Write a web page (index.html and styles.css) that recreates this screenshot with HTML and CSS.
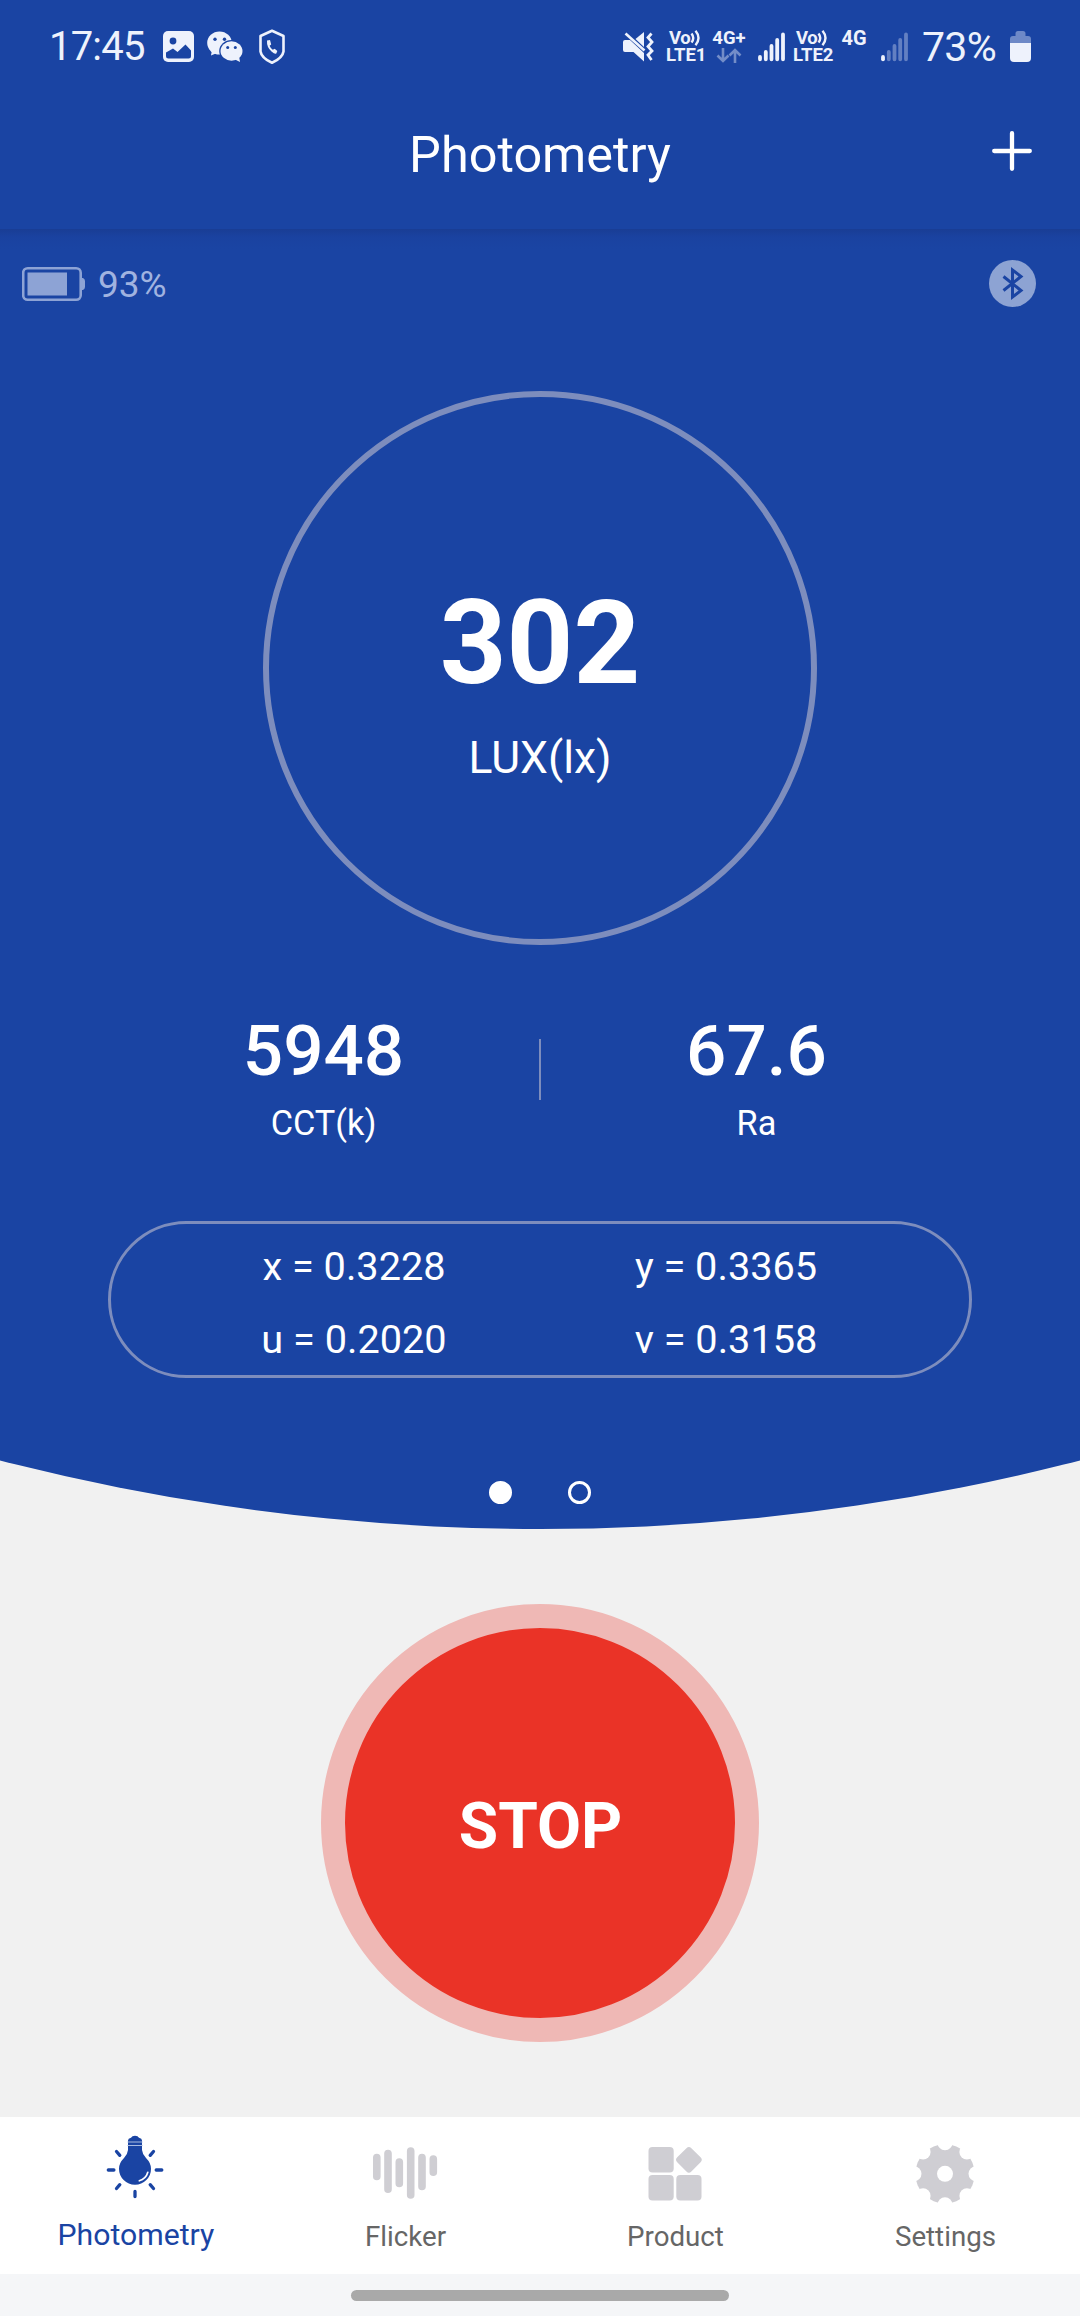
FILE: index.html
```html
<!DOCTYPE html>
<html lang="en">
<head>
  <meta charset="UTF-8">
  <meta name="viewport" content="width=device-width, initial-scale=1.0">
  <title>Photometry</title>
  <link rel="stylesheet" href="styles.css">
</head>
<body>
  <div class="status-bar">
    <div class="status-left">
      <span class="clock">17:45</span>
      <svg class="ico-photo" width="31" height="31" viewBox="0 0 31 31">
        <rect width="31" height="31" rx="5" fill="#eef2fc"/>
        <circle cx="10" cy="10" r="3.4" fill="#1a44a3"/>
        <path d="M3 21.5l7-4 4.500 3.500L22.500 13.500l5.500 6V25q0 2.500-2.500 2.500h-20Q3 27.500 3 25z" fill="#1a44a3"/>
      </svg>
      <svg class="ico-chat" width="36" height="32" viewBox="0 0 36 32">
        <ellipse cx="12.500" cy="12" rx="12.300" ry="11.500" fill="#eef2fc"/>
        <path d="M5 19l-1 5.500 6-2.500z" fill="#eef2fc"/>
        <ellipse cx="24.500" cy="20" rx="12.300" ry="11" fill="#1a44a3"/>
        <ellipse cx="24.500" cy="20" rx="11" ry="9.700" fill="#eef2fc"/>
        <path d="M27 28l6 3-.8-5z" fill="#eef2fc"/>
        <g fill="#1a44a3">
          <circle cx="8" cy="8.200" r="1.700"/><circle cx="17.500" cy="8.200" r="1.700"/>
          <circle cx="20.700" cy="16.500" r="1.500"/><circle cx="28.300" cy="16.500" r="1.500"/>
        </g>
      </svg>
      <svg class="ico-shield" width="28" height="36" viewBox="0 0 28 36">
        <path d="M14 1.800L25.500 7v15.500Q24.500 29 14 33.800 3.500 29 2.500 22.500V7z" fill="none" stroke="#eef2fc" stroke-width="2.600" stroke-linejoin="round"/>
        <path d="M9 11.500l3-.5 1.200 4.500-1.600 1.300q1 2.700 3.200 4l1.900-1 2.600 2.200-1 2.500Q17 25.500 13.500 22.500 8.500 18 9 11.500z" fill="#eef2fc"/>
      </svg>
    </div>
    <div class="status-right">
      <svg class="ico-mute" width="31" height="30" viewBox="0 0 31 30">
        <path d="M0 10Q0 8 2 8H7l14 13v8.500L10.500 20H2Q0 20 0 18z" fill="#eef2fc"/>
        <path d="M12.500 7L21 0V15z" fill="#eef2fc"/>
        <path d="M2.500 1.500L21.500 18.500" stroke="#eef2fc" stroke-width="2.600"/>
        <path d="M28.500 1.500l-3.500 4 4 4.500-4 4.500 4 4.500-4 4 3.500 5" fill="none" stroke="#eef2fc" stroke-width="2.800"/>
      </svg>
      <div class="lte">
        <div class="vo">Vo<svg width="11" height="16" viewBox="0 0 11 16"><path d="M1.500 3.500q3.500 4.500 0 9M5.500 .8q6 7.200 0 14.400" fill="none" stroke="#eef2fc" stroke-width="2.400"/></svg></div>
        <div>LTE1</div>
      </div>
      <div class="net net-plus">
        <div>4G+</div>
        <svg width="26" height="15" viewBox="0 0 26 15"><path d="M7 0v13M1.500 7.500L7 13l5.500-5.500M19 15V2M13.500 7.500L19 2l5.500 5.500" fill="none" stroke="#eef2fc" stroke-opacity=".42" stroke-width="2.600"/></svg>
      </div>
      <svg class="bars" width="28" height="30" viewBox="0 0 28 30">
        <g stroke="#eef2fc" stroke-width="3.800" stroke-linecap="round">
          <path d="M2 25v2.300M7.800 20v7.300M13.500 14v13.300M19.200 8v19.300M25 2.500v24.800"/>
        </g>
      </svg>
      <div class="lte lte-two">
        <div class="vo">Vo<svg width="11" height="16" viewBox="0 0 11 16"><path d="M1.500 3.500q3.500 4.500 0 9M5.500 .8q6 7.200 0 14.400" fill="none" stroke="#eef2fc" stroke-width="2.400"/></svg></div>
        <div>LTE2</div>
      </div>
      <div class="net">
        <div class="big">4G</div>
      </div>
      <svg class="bars bars-two" width="28" height="30" viewBox="0 0 28 30">
        <g stroke="#eef2fc" stroke-width="3.800" stroke-linecap="round">
          <path d="M2 25v2.300"/>
          <path d="M7.800 20v7.300M13.500 14v13.300M19.200 8v19.300M25 2.500v24.800" stroke-opacity=".35"/>
        </g>
      </svg>
      <span class="charge">73%</span>
      <svg class="ico-battery" width="21" height="31" viewBox="0 0 21 31">
        <path d="M0 12V8q0-3 3-3h2.500V2.500Q5.500 0 8 0h5q2.500 0 2.500 2.500V5H18q3 0 3 3v4z" fill="#eef2fc" fill-opacity=".4"/>
        <path d="M0 12h21v15q0 4-4 4H4q-4 0-4-4z" fill="#eef2fc"/>
      </svg>
    </div>
  </div>

  <header class="app-bar">
    <h1 class="title">Photometry</h1>
    <svg class="add" width="40" height="40" viewBox="0 0 40 40"><path d="M20 2.200v35.600M2.200 20h35.600" stroke="#fff" stroke-width="4.300" stroke-linecap="round"/></svg>
  </header>

  <main class="meter">
    <div class="device">
      <svg width="64" height="36" viewBox="0 0 64 36">
        <rect x="1.200" y="2.200" width="57.500" height="31.600" rx="4.500" fill="none" stroke="#8da3d5" stroke-width="2.600"/>
        <rect x="5.500" y="6.500" width="39.500" height="23" fill="#8da3d5"/>
        <path d="M60 12h1q2 1 2 3v6q0 2-2 3h-1z" fill="#8da3d5"/>
      </svg>
      <span class="device-level">93%</span>
      <svg class="bluetooth" width="47" height="47" viewBox="0 0 47 47">
        <circle cx="23.500" cy="23.500" r="23.500" fill="#8da3d3"/>
        <path d="M14.500 16.500L32 30.500l-8.500 6.500V10l8.500 6.500L14.500 30.500" fill="none" stroke="#1a44a3" stroke-width="3"/>
      </svg>
    </div>

    <div class="dial">
      <div class="lux">302</div>
      <div class="lux-unit">LUX(lx)</div>
    </div>

    <div class="stats">
      <div class="stat">
        <div class="stat-value">5948</div>
        <div class="stat-name">CCT(k)</div>
      </div>
      <div class="divider"></div>
      <div class="stat">
        <div class="stat-value">67.6</div>
        <div class="stat-name">Ra</div>
      </div>
    </div>

    <div class="coords">
      <span>x = 0.3228</span>
      <span>y = 0.3365</span>
      <span>u = 0.2020</span>
      <span>v = 0.3158</span>
    </div>

    <div class="dots">
      <span class="dot active"></span>
      <span class="dot"></span>
    </div>
  </main>

  <div class="action">
    <button class="stop">STOP</button>
  </div>

  <nav class="tabs">
    <div class="tab active">
      <svg width="70" height="76" viewBox="0 0 70 76">
        <path d="M28 10.500q0-2 3-2.800Q32 5.800 35 5.800t4 1.900q3 .8 3 2.800v9.500q.3 4 4 8Q51 33 51 38.700a16 16 0 0 1-32 0q0-5.700 5-10.700 3.700-4 4-8z" fill="#1a44a3"/>
        <path d="M27.500 12h15M27.500 15.500h15" stroke="#a9bbe2" stroke-width="1.200"/>
        <path d="M47.800 42.300q-1.800 6.500-8.500 8.500" fill="none" stroke="#fff" stroke-width="1.700" stroke-linecap="round"/>
        <path d="M8.300 40h5.600M56.200 40h5.600M35 61.500v5M16.500 21.500l3.300 3.800M53.500 21.500l-3.300 3.800M16.500 58.500l3.300-3.800M53.500 58.500l-3.300-3.800" stroke="#1a44a3" stroke-width="3.300" stroke-linecap="round"/>
      </svg>
      <span>Photometry</span>
    </div>
    <div class="tab">
      <svg width="70" height="76" viewBox="0 0 70 76">
        <path d="M6.800 27.500v19M18 23.500v35.700M29.300 32v21.500M40.700 21v44M52 27.500v29M63.300 29v13.200" stroke="#cfced3" stroke-width="7.600" stroke-linecap="round"/>
      </svg>
      <span>Flicker</span>
    </div>
    <div class="tab">
      <svg width="70" height="76" viewBox="0 0 70 76">
        <g fill="#cfced3">
          <rect x="8.500" y="17" width="25.200" height="25.500" rx="4"/>
          <rect x="8.500" y="45" width="25.200" height="25.500" rx="4"/>
          <rect x="36.300" y="45" width="25.200" height="25.500" rx="4"/>
          <rect x="38.900" y="19.800" width="20" height="20" rx="3.500" transform="rotate(45 48.900 29.800)"/>
        </g>
      </svg>
      <span>Product</span>
    </div>
    <div class="tab">
      <svg width="70" height="76" viewBox="0 0 70 76">
        <circle cx="35" cy="43.800" r="29.600" fill="#cfced3"/>
        <g fill="#fff">
          <circle cx="35" cy="43.800" r="8"/>
          <circle cx="35" cy="12.800" r="7.500"/>
          <circle cx="35" cy="74.800" r="7.500"/>
          <circle cx="4" cy="43.800" r="7.500"/>
          <circle cx="66" cy="43.800" r="7.500"/>
          <circle cx="13.100" cy="21.900" r="7.500"/>
          <circle cx="56.900" cy="21.900" r="7.500"/>
          <circle cx="13.100" cy="65.700" r="7.500"/>
          <circle cx="56.900" cy="65.700" r="7.500"/>
        </g>
      </svg>
      <span>Settings</span>
    </div>
  </nav>

  <div class="gesture-area">
    <div class="gesture-bar"></div>
  </div>
</body>
</html>
```

FILE: styles.css
```css
* {
  box-sizing: border-box;
}
body {
  display: flex;
  flex-direction: column;
  width: 1080px;
  height: 2316px;
  margin: 0;
  background: #f1f1f1;
  font-family: Roboto, "Noto Sans", sans-serif;
  color: #fff;
  overflow: hidden;
}
svg {
  display: block;
  flex: none;
}

/* status bar */
.status-bar {
  display: flex;
  justify-content: space-between;
  height: 93px;
  padding: 0 49px 0 49px;
  background: #1a44a3;
  color: #eef2fc;
}
.status-left, .status-right {
  display: flex;
  align-items: center;
}
.clock {
  width: 114px;
  font-size: 40px;
  letter-spacing: -0.8px;
}
.ico-chat {
  margin-left: 13px;
}
.ico-shield {
  margin-left: 15px;
}
.lte {
  width: 40px;
  margin-left: 12px;
  font-size: 18.5px;
  font-weight: 700;
  line-height: 17px;
}
.vo {
  display: flex;
  align-items: center;
  height: 17px;
  padding-left: 3px;
  letter-spacing: -0.5px;
}
.net {
  display: flex;
  flex-direction: column;
  align-items: center;
  width: 34px;
  height: 34px;
  font-size: 18.5px;
  font-weight: 700;
  line-height: 17px;
}
.net-plus {
  margin-left: 6px;
}
.net-plus svg {
  margin-top: 1px;
}
.big {
  font-size: 20px;
}
.bars {
  margin-left: 12px;
}
.lte-two {
  margin-left: 7px;
}
.lte-two + .net {
  margin-left: 4px;
}
.bars-two {
  margin-left: 10px;
}
.charge {
  width: 90px;
  padding-left: 13px;
  font-size: 41px;
  letter-spacing: -0.7px;
}
.ico-battery {
  margin-left: 11px;
}

/* app bar */
.app-bar {
  display: grid;
  grid-template-columns: 1fr auto 1fr;
  align-items: center;
  height: 136px;
  padding: 0 48px 13px;
  background: #1a44a3;
}
.title {
  grid-column: 2;
  margin: 1px 0 0;
  font-size: 50.4px;
  font-weight: 400;
  line-height: 60px;
}
.add {
  justify-self: end;
  margin-bottom: 7px;
}

/* measurement panel, the bottom edge is an arc */
.meter {
  display: flex;
  flex-direction: column;
  align-items: center;
  height: 1300px;
  padding-top: 31px;
  background: linear-gradient(#193d94, #1a42a0 8px, #1a44a3 20px);
  clip-path: circle(2160px at 50% calc(100% - 2160px));
}
.device {
  display: flex;
  align-items: center;
  width: 100%;
  height: 47px;
  padding: 0 44px 0 22px;
}
.device-level {
  margin: 3px 0 0 12px;
  font-size: 37px;
  line-height: 40px;
  color: #a0b3e0;
}
.bluetooth {
  margin-left: auto;
}
.dial {
  width: 554px;
  height: 554px;
  margin-top: 84px;
  padding-top: 188px;
  border: 6px solid #7d8dbd;
  border-radius: 50%;
  text-align: center;
}
.lux {
  font-size: 116.5px;
  font-weight: 700;
  line-height: 117px;
}
.lux-unit {
  margin-top: 26px;
  font-size: 44.5px;
  line-height: 60px;
}
.stats {
  display: flex;
  width: 864px;
  height: 128px;
  margin-top: 69px;
  text-align: center;
}
.stat {
  flex: 1;
  padding-top: 1px;
}
.stat-value {
  font-size: 71px;
  font-weight: 500;
  line-height: 72px;
}
.stat-name {
  margin-top: 16px;
  font-size: 34.3px;
  line-height: 40px;
}
.divider {
  width: 2px;
  height: 61px;
  margin-top: 25px;
  background: #7d8dbd;
}
.coords {
  display: grid;
  grid-template-columns: 1fr 1fr;
  grid-auto-rows: 73px;
  width: 864px;
  height: 157px;
  margin-top: 79px;
  padding: 6px 57px 0;
  border: 3px solid #7d8dbd;
  border-radius: 79px;
  font-size: 39.7px;
  line-height: 73px;
  text-align: center;
}
.dots {
  display: flex;
  gap: 56px;
  margin-top: 103px;
}
.dot {
  width: 23px;
  height: 23px;
  border: 3px solid #fff;
  border-radius: 50%;
}
.dot.active {
  background: #fff;
}

.action {
  display: flex;
  justify-content: center;
  height: 588px;
  padding-top: 75px;
}
.stop {
  width: 438px;
  height: 438px;
  padding: 6px 0 0 1px;
  border: 24.5px solid #efb8b5;
  border-radius: 50%;
  background: #ea3327;
  color: #fff;
  font-family: inherit;
  font-size: 64px;
  font-weight: 700;
}

/* bottom tabs */
.tabs {
  display: flex;
  height: 157px;
  background: #fff;
}
.tab {
  display: flex;
  flex: 1;
  flex-direction: column;
  align-items: center;
  padding-top: 13px;
  font-size: 27.7px;
  line-height: 40px;
  color: #666;
}
.tab span {
  margin-top: 11px;
  padding-left: 1px;
}
.tab.active {
  font-size: 30.2px;
  color: #1a44a3;
}
.tab.active span {
  margin-top: 9px;
  padding-left: 2px;
}
.gesture-area {
  display: flex;
  justify-content: center;
  height: 42px;
  padding-top: 16px;
  background: #f5f6f8;
}
.gesture-bar {
  width: 378px;
  height: 11px;
  border-radius: 6px;
  background: #a9a9a9;
}
```
